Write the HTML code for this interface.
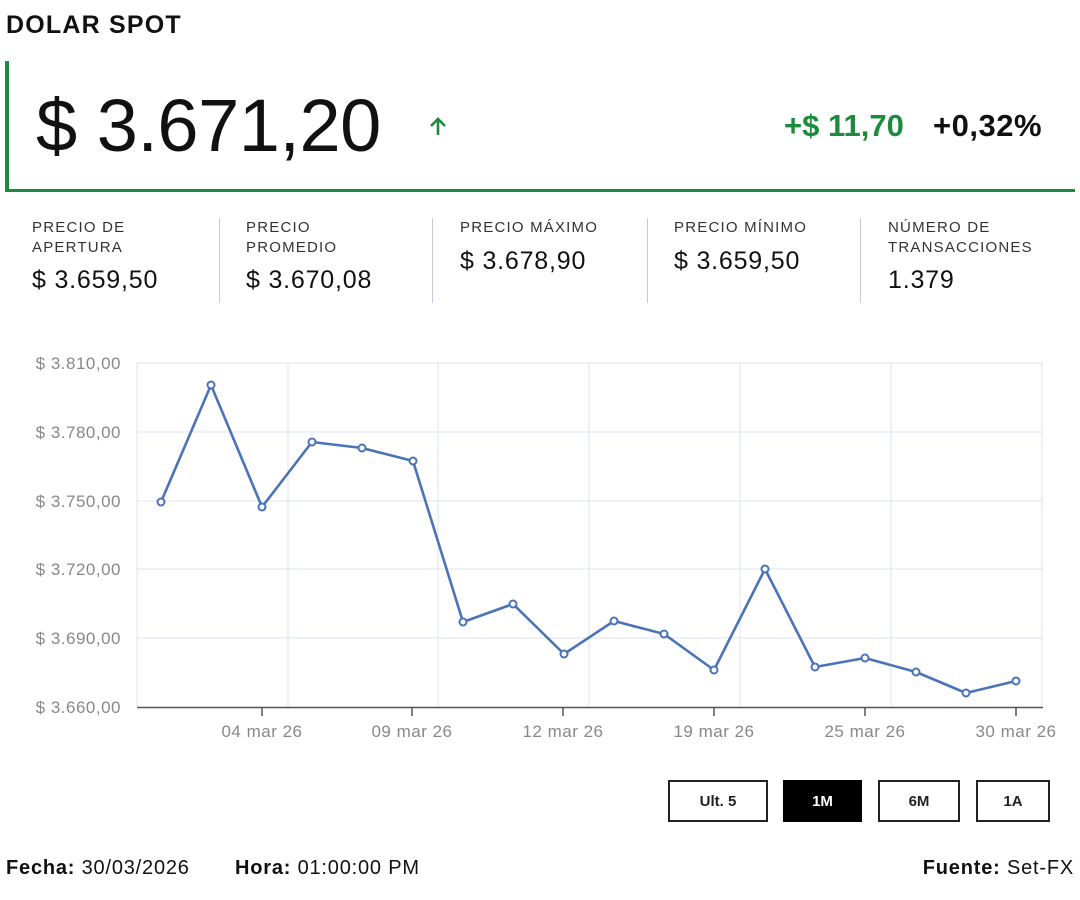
<!DOCTYPE html>
<html><head><meta charset="utf-8"><style>
*{margin:0;padding:0;box-sizing:border-box}
body{width:1080px;height:900px;background:#fff;font-family:"Liberation Sans",sans-serif;color:#111;position:relative;overflow:hidden}
.a{position:absolute;white-space:nowrap}
.lbl{font-size:15px;color:#333;line-height:20px;letter-spacing:1.2px}
.val{font-size:25px;color:#111;letter-spacing:.8px}
.sep{position:absolute;top:218px;width:1px;height:85px;background:#c9c9dd}
.btn{position:absolute;top:780px;height:42px;border:2px solid #222;font-size:15px;font-weight:bold;display:flex;align-items:center;justify-content:center;color:#222}
</style></head><body>
<div class="a" style="left:6px;top:11px;font-size:25px;font-weight:bold;letter-spacing:1.2px">DOLAR SPOT</div>
<div class="a" style="left:5px;top:61px;width:4px;height:131px;background:#1e8a3e"></div>
<div class="a" style="left:5px;top:189px;width:1070px;height:3px;background:#1e8a3e"></div>
<div class="a" style="left:36px;top:83px;font-size:74px;letter-spacing:-0.5px">$ 3.671,20</div>
<svg class="a" style="left:426px;top:115px" width="24" height="24" viewBox="0 0 24 24"><path d="M12 20V4M5 11l7-7 7 7" stroke="#1e8a3e" stroke-width="2.6" fill="none"/></svg>
<div class="a" style="left:784px;top:108px;font-size:31px;font-weight:bold;color:#1e8a3e">+$ 11,70</div>
<div class="a" style="left:933px;top:108px;font-size:31px;font-weight:bold;letter-spacing:.5px">+0,32%</div>

<div class="a lbl" style="left:32px;top:218px">PRECIO DE<br>APERTURA</div>
<div class="a val" style="left:32px;top:266px">$ 3.659,50</div>
<div class="sep" style="left:219px"></div>
<div class="a lbl" style="left:246px;top:218px">PRECIO<br>PROMEDIO</div>
<div class="a val" style="left:246px;top:266px">$ 3.670,08</div>
<div class="sep" style="left:432px"></div>
<div class="a lbl" style="left:460px;top:218px">PRECIO MÁXIMO</div>
<div class="a val" style="left:460px;top:247px">$ 3.678,90</div>
<div class="sep" style="left:647px"></div>
<div class="a lbl" style="left:674px;top:218px">PRECIO MÍNIMO</div>
<div class="a val" style="left:674px;top:247px">$ 3.659,50</div>
<div class="sep" style="left:860px"></div>
<div class="a lbl" style="left:888px;top:218px">NÚMERO DE<br>TRANSACCIONES</div>
<div class="a val" style="left:888px;top:266px">1.379</div>

<svg class="a" style="left:0;top:0" width="1080" height="760" viewBox="0 0 1080 760">
<g stroke="#dde3ee" stroke-width="1" fill="none">
<path d="M137 363H1043M137 432H1043M137 501H1043M137 569H1043M137 638H1043"/>
<path d="M137 363V707M288 363V707M438 363V707M589 363V707M740 363V707M891 363V707M1042 363V707"/>
</g>
<path d="M137 707.5H1043" stroke="#555" stroke-width="1.5"/>
<g stroke="#555" stroke-width="1.5"><path d="M262 707V716M412 707V716M563 707V716M714 707V716M865 707V716M1016 707V716"/></g>
<g font-family="Liberation Sans, sans-serif" font-size="17" fill="#888" text-anchor="end" letter-spacing="0.5">
<text x="121" y="369">$ 3.810,00</text><text x="121" y="438">$ 3.780,00</text><text x="121" y="507">$ 3.750,00</text><text x="121" y="575">$ 3.720,00</text><text x="121" y="644">$ 3.690,00</text><text x="121" y="713">$ 3.660,00</text>
</g>
<g font-family="Liberation Sans, sans-serif" font-size="17" fill="#888" text-anchor="middle" letter-spacing="0.5">
<text x="262" y="737">04 mar 26</text><text x="412" y="737">09 mar 26</text><text x="563" y="737">12 mar 26</text><text x="714" y="737">19 mar 26</text><text x="865" y="737">25 mar 26</text><text x="1016" y="737">30 mar 26</text>
</g>
<polyline fill="none" stroke="#4a73b8" stroke-width="2.6" stroke-linejoin="round" points="161,502 211,385 262,507 312,442 362,448 413,461 463,622 513,604 564,654 614,621 664,634 714,670 765,569 815,667 865,658 916,672 966,693 1016,681"/>
<g fill="#fff" stroke="#4a73b8" stroke-width="2">
<circle cx="161" cy="502" r="3.5"/><circle cx="211" cy="385" r="3.5"/><circle cx="262" cy="507" r="3.5"/><circle cx="312" cy="442" r="3.5"/><circle cx="362" cy="448" r="3.5"/><circle cx="413" cy="461" r="3.5"/><circle cx="463" cy="622" r="3.5"/><circle cx="513" cy="604" r="3.5"/><circle cx="564" cy="654" r="3.5"/><circle cx="614" cy="621" r="3.5"/><circle cx="664" cy="634" r="3.5"/><circle cx="714" cy="670" r="3.5"/><circle cx="765" cy="569" r="3.5"/><circle cx="815" cy="667" r="3.5"/><circle cx="865" cy="658" r="3.5"/><circle cx="916" cy="672" r="3.5"/><circle cx="966" cy="693" r="3.5"/><circle cx="1016" cy="681" r="3.5"/>
</g>
</svg>

<div class="btn" style="left:668px;width:100px">Ult. 5</div>
<div class="btn" style="left:783px;width:79px;background:#000;border-color:#000;color:#fff">1M</div>
<div class="btn" style="left:878px;width:82px">6M</div>
<div class="btn" style="left:976px;width:74px">1A</div>

<div class="a" style="left:6px;top:857px;font-size:20px;letter-spacing:.8px"><b>Fecha:</b> 30/03/2026</div>
<div class="a" style="left:235px;top:857px;font-size:20px;letter-spacing:.8px"><b>Hora:</b> 01:00:00 PM</div>
<div class="a" style="right:6px;top:857px;font-size:20px;letter-spacing:.8px"><b>Fuente:</b> Set-FX</div>
</body></html>
